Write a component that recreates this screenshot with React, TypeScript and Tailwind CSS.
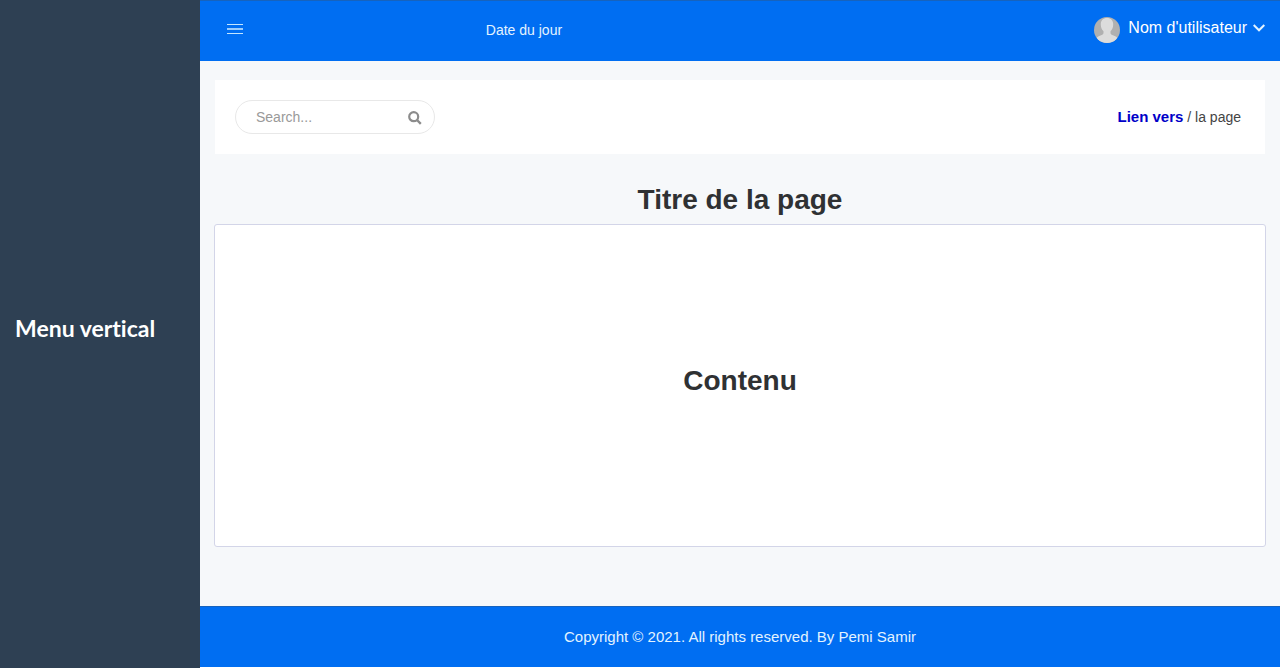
import React from "react";

function MenuIcon() {
  return (
    <svg width="16" height="12" viewBox="0 0 16 12" fill="none" stroke="#c4e6ff" aria-hidden="true">
      <path d="M0 1.5h16M0 10.5h16" />
      <path d="M0 6h16" strokeWidth="1.600" />
    </svg>
  );
}

function Avatar() {
  return (
    <svg width="26" height="26" viewBox="0 0 26 26" aria-hidden="true">
      <defs>
        <clipPath id="avatar-clip">
          <circle cx="13" cy="13" r="13" />
        </clipPath>
      </defs>
      <g clipPath="url(#avatar-clip)">
        <rect width="26" height="26" fill="#b0b0b0" />
        <path
          d="M13 1c4 0 6.200 2.600 6.200 6.500 0 3-1.200 5.400-2.700 6.700v1.800c0 1.200 1.200 1.700 3 2.400 2.500 1 4.500 2 5.500 4V27H1v-4.600c1-2 3-3 5.500-4 1.800-.7 3-1.200 3-2.400v-1.800C8 12.900 6.800 10.500 6.800 7.500 6.800 3.600 9 1 13 1z"
          fill="#dcdcdc"
        />
      </g>
    </svg>
  );
}

function ChevronIcon() {
  return (
    <svg width="12" height="8" viewBox="0 0 12 8" fill="none" stroke="#e3f3ff" strokeWidth="2" aria-hidden="true">
      <path d="M.7 1l5.300 5.300L11.300 1" />
    </svg>
  );
}

function SearchIcon() {
  return (
    <svg width="14" height="14" viewBox="0 0 14 14" fill="none" stroke="#8c8c8c" aria-hidden="true">
      <circle cx="5.700" cy="5.700" r="4.500" strokeWidth="2.200" />
      <path d="M9 9l3.800 3.800" strokeWidth="2.400" />
    </svg>
  );
}

function Header() {
  return (
    <header className="grid h-[61px] grid-cols-[1fr_3fr_auto] items-center border-t border-[#1763bd] bg-[#006ef2] pr-[15px] pl-[27px] text-white">
      <div className="flex pb-1">
        <button type="button" aria-label="Menu" className="cursor-pointer">
          <MenuIcon />
        </button>
      </div>
      <p className="pb-0.5 pl-[42px] text-sm text-[#e3f3ff]">Date du jour</p>
      <button type="button" className="flex cursor-pointer items-center gap-2 pb-1.5 text-base">
        <span className="pt-1">
          <Avatar />
        </span>
        <span className="flex items-center gap-1.5">
          Nom d'utilisateur
          <ChevronIcon />
        </span>
      </button>
    </header>
  );
}

function Toolbar() {
  return (
    <div className="mx-px flex items-center justify-between bg-white py-5 pr-6 pl-5">
      <form role="search" className="flex h-[34px] w-[200px] items-center rounded-full border border-[#e8e8e8] pr-3 pl-5">
        <input
          type="text"
          aria-label="Search"
          placeholder="Search..."
          className="min-w-0 flex-1 text-sm outline-none placeholder:text-[#999999]"
        />
        <button type="button" aria-label="Search" className="cursor-pointer pt-0.5">
          <SearchIcon />
        </button>
      </form>
      <nav className="text-sm text-[#444444]">
        <a href="#" className="text-[15px] font-bold text-[#0000c8]">Lien vers</a> / la page
      </nav>
    </div>
  );
}

export default function App() {
  return (
    <div className="flex min-h-screen bg-white font-['Liberation_Sans',Arial,sans-serif]">
      <aside className="flex w-[200px] shrink-0 items-center bg-[#2e4053] pl-[15px]">
        <h2 className="pb-3 font-['Lato',sans-serif] text-[23px] leading-7 font-bold text-white [font-variant-ligatures:none]">
          Menu vertical
        </h2>
      </aside>
      <div className="flex min-w-0 flex-1 flex-col pb-px">
        <Header />
        <main className="flex flex-1 flex-col bg-[#f6f8fa] pt-[19px] pr-3.5 pb-[59px] pl-3.5">
          <Toolbar />
          <h1 className="pt-7 pb-1.5 text-center text-[28px] leading-9 font-bold text-[#2f3133]">Titre de la page</h1>
          <section className="flex flex-1 items-center justify-center rounded-[3px] border border-[#d3d5e8] bg-white">
            <h2 className="pb-2.5 text-[28px] leading-9 font-bold text-[#2f3133]">Contenu</h2>
          </section>
        </main>
        <footer className="flex h-[61px] items-center justify-center border-t border-[#1763bd] bg-[#006ef2] text-[15px] text-[#e3f3ff]">
          Copyright © 2021. All rights reserved. By Pemi Samir
        </footer>
      </div>
    </div>
  );
}
